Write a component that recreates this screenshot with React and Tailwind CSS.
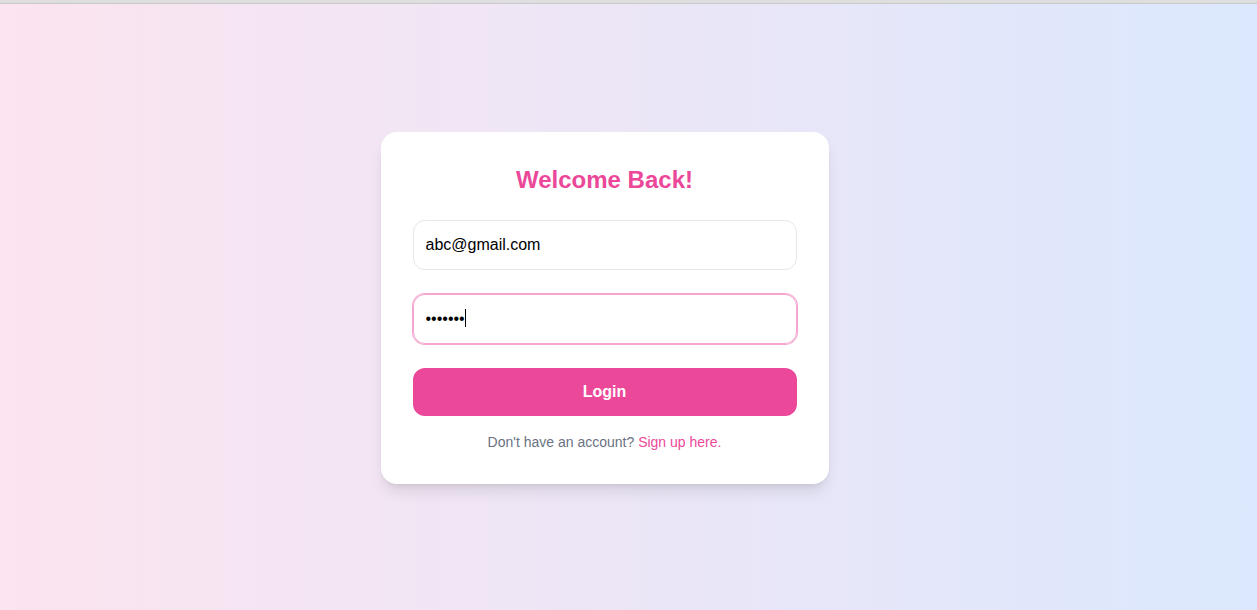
import React, { useState } from 'react';

const App = () => {
    const [email, setEmail] = useState('abc@gmail.com');
    const [password, setPassword] = useState('1234567');

    return (
        <div className="h-screen flex flex-col font-['Liberation_Sans',Arial,sans-serif]">
            {/* faixa cinza do topo */}
            <div className="h-[4px] bg-[#dedede] border-b border-[#c9c9c9] shrink-0" />

            <div className="flex-1 flex items-center justify-center pr-12 pt-0.5 bg-gradient-to-r from-[#fce4f0] to-[#dbe8fd]">
                <div className="w-[448px] bg-white rounded-2xl shadow-lg p-8">
                    <h2 className="text-2xl leading-8 font-bold text-[#ec4899] text-center mb-6">Welcome Back!</h2>

                    <div className="space-y-6">
                        <input
                            type="email"
                            value={email}
                            onChange={(e) => setEmail(e.target.value)}
                            className="block w-full px-3 py-3 text-base leading-6 text-black border border-gray-200 rounded-xl outline-none"
                        />

                        <div className="relative">
                            <input
                                type="password"
                                value={password}
                                onChange={(e) => setPassword(e.target.value)}
                                className="block w-full px-3 py-3 text-base leading-6 text-black border border-[#f4a6cf] ring-1 ring-[#f4a6cf] rounded-xl outline-none"
                            />
                            {/* cursor piscando */}
                            <span className="absolute left-[52px] top-[15px] w-px h-[18px] bg-black" />
                        </div>

                        <button className="w-full py-3 text-base leading-6 font-bold text-white bg-[#ec4899] rounded-xl">
                            Login
                        </button>
                    </div>

                    <p className="mt-4 text-sm leading-5 text-gray-500 text-center">
                        Don't have an account? <a href="#" className="text-[#ec4899]">Sign up here.</a>
                    </p>
                </div>
            </div>
        </div>
    );
};

export default App;
